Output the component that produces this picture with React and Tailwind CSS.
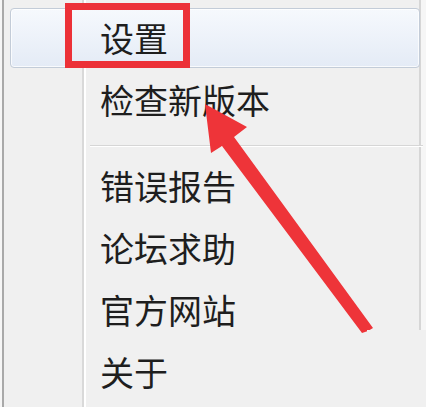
import React from "react";

const items = ["错误报告", "论坛求助", "官方网站", "关于"];

export default function App() {
  return (
    <div className="relative w-[426px] h-[407px] overflow-hidden font-['Noto_Sans_CJK_SC','Noto_Sans_CJK_JP',sans-serif] text-[34px] leading-none text-[#1e1e1e] bg-[linear-gradient(to_right,#f6f6f6_0px,#f6f6f6_2px,#a9a9a9_2px,#a9a9a9_4px,#f0f0f0_4px,#f0f0f0_82px,#d9d9d9_82px,#d9d9d9_84px,#ffffff_84px,#ffffff_86px,#f0f0f0_86px,#f0f0f0_419px,#d6d6d6_419px,#d6d6d6_421px,#f6f6f6_421px)]">
      {/* menu items */}
      <div className="flex flex-col pt-[7px]">
        <div className="h-[62px] flex items-center">
          <div className="flex-1 h-[60px] ml-[10px] mr-[6px] flex items-center pl-[89px] rounded-[4px] border border-[#c3ccd8] bg-gradient-to-b from-[#f6f9fd] to-[#e4ebf6] shadow-[inset_0_0_0_1px_rgba(255,255,255,0.75)]">
            设置
          </div>
        </div>
        <div className="h-[62px] flex items-center pl-[100px]">检查新版本</div>
        <div className="h-[24px] pt-[14px] pl-[90px] pr-[3px]">
          <div className="h-[1px] bg-[#d6d6d6]" />
          <div className="h-[1px] bg-white" />
        </div>
        {items.map((label) => (
          <div key={label} className="h-[62px] flex items-center pl-[100px]">
            {label}
          </div>
        ))}
      </div>

      {/* red annotation box */}
      <div className="absolute left-[65px] top-[3px] w-[125px] h-[65px] border-[7px] border-[#ec3138]" />

      {/* red arrow */}
      <svg
        className="absolute left-0 top-0"
        width="426"
        height="407"
        viewBox="0 0 426 407"
      >
        <polygon
          points="205,104 247,127 234,137 373,328 368,331 362,333 222,146 211,153"
          fill="#ee3439"
        />
      </svg>

      {/* flat patch where the crop ends */}
      <div className="absolute left-[367px] top-[330px] right-0 bottom-0 bg-[#f0f0f0]" />
    </div>
  );
}
